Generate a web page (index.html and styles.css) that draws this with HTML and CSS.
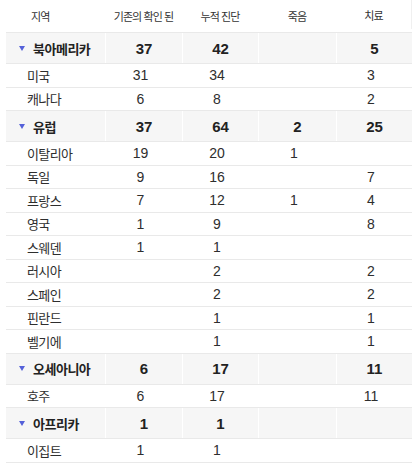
FILE: index.html
```html
<!DOCTYPE html>
<html lang="ko">
<head>
<meta charset="utf-8">
<title>지역별 현황</title>
<link rel="stylesheet" href="styles.css">
</head>
<body>
<div class="table">
  <div class="tr hdr">
    <div class="c name">지역</div>
    <div class="c">기존의 확인 된</div>
    <div class="c">누적 진단</div>
    <div class="c">죽음</div>
    <div class="c last">치료</div>
  </div>

  <div class="tr grp">
    <div class="c name"><svg class="tri" width="6" height="5" viewBox="0 0 6 5"><path d="M0 0H6L3 5Z"/></svg><span>북아메리카</span></div>
    <div class="c">37</div><div class="c">42</div><div class="c"></div><div class="c">5</div>
  </div>
  <div class="tr row"><div class="c name">미국</div><div class="c">31</div><div class="c">34</div><div class="c"></div><div class="c">3</div></div>
  <div class="tr row"><div class="c name">캐나다</div><div class="c">6</div><div class="c">8</div><div class="c"></div><div class="c">2</div></div>

  <div class="tr grp">
    <div class="c name"><svg class="tri" width="6" height="5" viewBox="0 0 6 5"><path d="M0 0H6L3 5Z"/></svg><span>유럽</span></div>
    <div class="c">37</div><div class="c">64</div><div class="c">2</div><div class="c">25</div>
  </div>
  <div class="tr row"><div class="c name">이탈리아</div><div class="c">19</div><div class="c">20</div><div class="c">1</div><div class="c"></div></div>
  <div class="tr row"><div class="c name">독일</div><div class="c">9</div><div class="c">16</div><div class="c"></div><div class="c">7</div></div>
  <div class="tr row"><div class="c name">프랑스</div><div class="c">7</div><div class="c">12</div><div class="c">1</div><div class="c">4</div></div>
  <div class="tr row"><div class="c name">영국</div><div class="c">1</div><div class="c">9</div><div class="c"></div><div class="c">8</div></div>
  <div class="tr row"><div class="c name">스웨덴</div><div class="c">1</div><div class="c">1</div><div class="c"></div><div class="c"></div></div>
  <div class="tr row"><div class="c name">러시아</div><div class="c"></div><div class="c">2</div><div class="c"></div><div class="c">2</div></div>
  <div class="tr row"><div class="c name">스페인</div><div class="c"></div><div class="c">2</div><div class="c"></div><div class="c">2</div></div>
  <div class="tr row"><div class="c name">핀란드</div><div class="c"></div><div class="c">1</div><div class="c"></div><div class="c">1</div></div>
  <div class="tr row"><div class="c name">벨기에</div><div class="c"></div><div class="c">1</div><div class="c"></div><div class="c">1</div></div>

  <div class="tr grp">
    <div class="c name"><svg class="tri" width="6" height="5" viewBox="0 0 6 5"><path d="M0 0H6L3 5Z"/></svg><span>오세아니아</span></div>
    <div class="c">6</div><div class="c">17</div><div class="c"></div><div class="c">11</div>
  </div>
  <div class="tr row"><div class="c name">호주</div><div class="c">6</div><div class="c">17</div><div class="c"></div><div class="c">11</div></div>

  <div class="tr grp">
    <div class="c name"><svg class="tri" width="6" height="5" viewBox="0 0 6 5"><path d="M0 0H6L3 5Z"/></svg><span>아프리카</span></div>
    <div class="c">1</div><div class="c">1</div><div class="c"></div><div class="c"></div>
  </div>
  <div class="tr row"><div class="c name">이집트</div><div class="c">1</div><div class="c">1</div><div class="c"></div><div class="c"></div></div>
</div>
</body>
</html>
```

FILE: styles.css
```css
html, body {
  margin: 0;
  padding: 0;
  background: #fff;
}
body {
  font-family: "Liberation Sans", "Noto Sans CJK KR", sans-serif;
  color: #333;
}
.table {
  margin-left: 6px;
  width: 406px;
}
.tr {
  display: grid;
  grid-template-columns: 99px 77px 76px 78px 76px;
  border-bottom: 1px solid #e9e9e9;
}
.c {
  display: flex;
  align-items: center;
  justify-content: center;
  white-space: nowrap;
}
.c.name {
  justify-content: flex-start;
}
.hdr {
  height: 32px;
  font-size: 11px;
  letter-spacing: -0.9px;
  color: #333;
}
.hdr .name {
  padding-left: 25px;
}
.hdr .last {
  border-right: 1px solid #f0f0f0;
  margin-bottom: 3px;
}
.grp {
  height: 30px;
  background: #f6f6f6;
  font-size: 15px;
  font-weight: bold;
  color: #222;
}
.grp .c + .c {
  border-left: 1px solid #fff;
}
.grp .name {
  padding-left: 13px;
  font-size: 13px;
  letter-spacing: -0.5px;
}
.tri {
  fill: #5561d9;
  margin-right: 8px;
  flex: none;
}
.row {
  height: 22.5px;
  font-size: 14px;
  color: #2e2e2e;
}
.row .c {
  padding-right: 6px;
}
.row .name {
  padding-left: 21px;
  padding-right: 0;
  font-size: 13px;
  letter-spacing: -0.6px;
}
```
